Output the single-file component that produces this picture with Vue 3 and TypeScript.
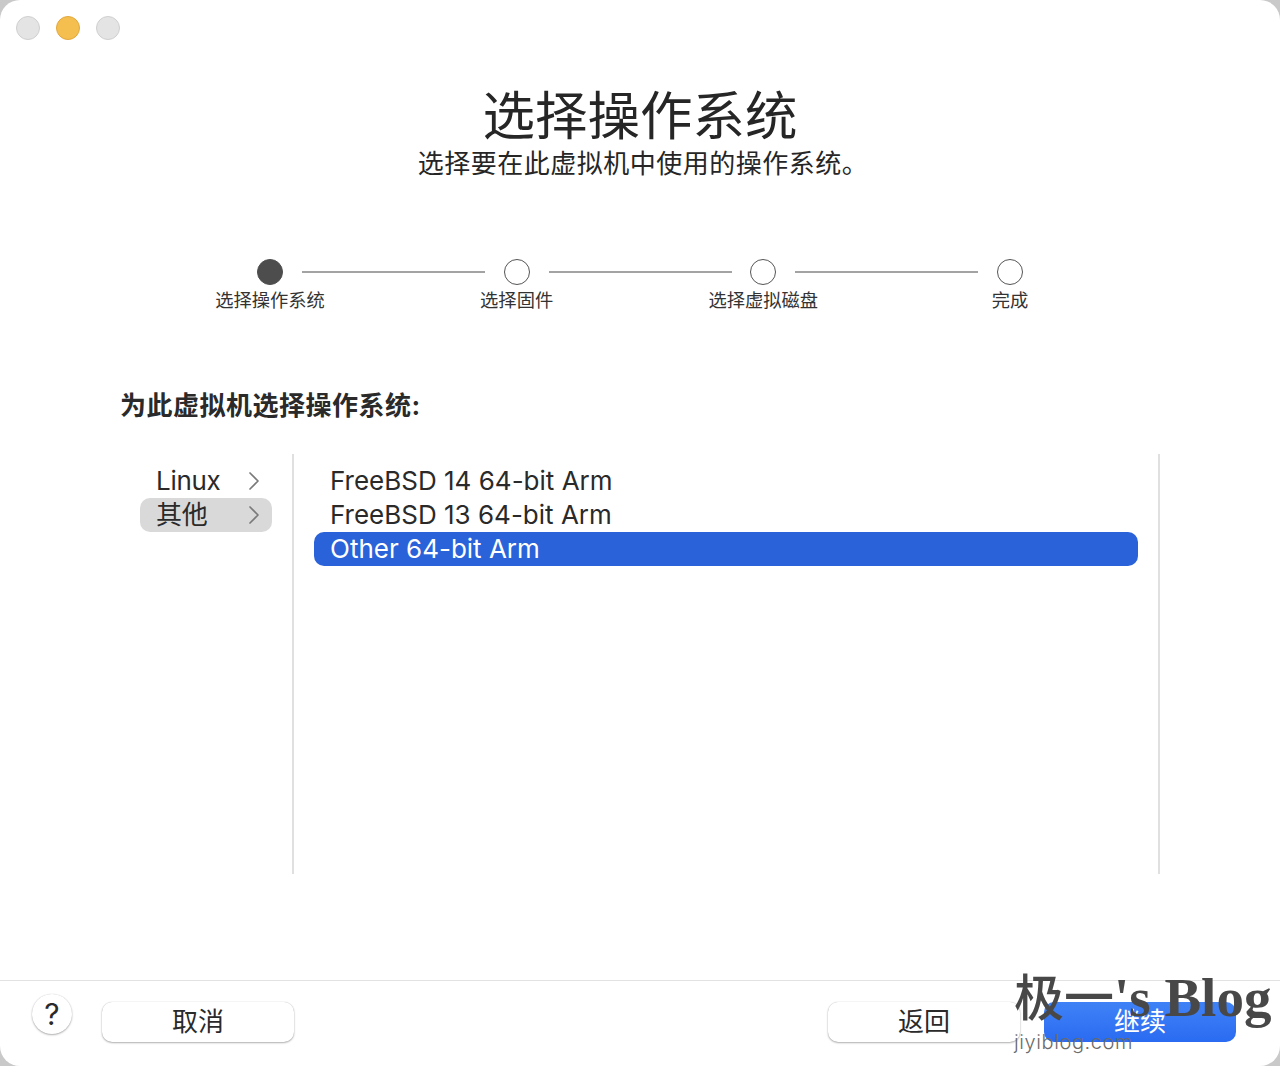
<script setup lang="ts">
interface Step { label: string; active: boolean }
const steps: Step[] = [
  { label: '选择操作系统', active: true },
  { label: '选择固件', active: false },
  { label: '选择虚拟磁盘', active: false },
  { label: '完成', active: false },
]
const categories = [
  { label: 'Linux', selected: false },
  { label: '其他', selected: true },
]
const systems = [
  { label: 'FreeBSD 14 64-bit Arm', selected: false },
  { label: 'FreeBSD 13 64-bit Arm', selected: false },
  { label: 'Other 64-bit Arm', selected: true },
]
</script>

<template>
  <div class="window">
    <div class="lights">
      <span class="light"></span>
      <span class="light amber"></span>
      <span class="light"></span>
    </div>

    <header class="head">
      <h1>选择操作系统</h1>
      <p>选择要在此虚拟机中使用的操作系统。</p>
    </header>

    <ol class="steps">
      <li v-for="(s, i) in steps" :key="s.label" class="step">
        <div class="track">
          <span class="dot" :class="{ on: s.active }"></span>
          <span v-if="i < steps.length - 1" class="line"></span>
        </div>
        <span class="step-label">{{ s.label }}</span>
      </li>
    </ol>

    <h2 class="prompt">为此虚拟机选择操作系统:</h2>

    <div class="browser">
      <div class="cats">
        <div v-for="c in categories" :key="c.label" class="cat" :class="{ sel: c.selected }">
          <span class="cat-name">{{ c.label }}</span>
          <svg width="10" height="18" viewBox="0 0 10 18" fill="none">
            <path d="M1 1 9 9 1 17" stroke="#7a7a7a" stroke-width="1.7" stroke-linecap="round" stroke-linejoin="round" />
          </svg>
        </div>
      </div>
      <div class="list">
        <div v-for="o in systems" :key="o.label" class="os" :class="{ sel: o.selected }">{{ o.label }}</div>
      </div>
    </div>

    <footer class="foot">
      <div class="foot-group">
        <button class="help" type="button">?</button>
        <button class="btn" type="button">取消</button>
      </div>
      <div class="foot-group wide">
        <button class="btn" type="button">返回</button>
        <button class="btn primary" type="button">继续</button>
      </div>
    </footer>

    <div class="mark">
      <div class="mark-big"><span class="mark-cjk">极一</span>'s Blog</div>
      <div class="mark-small">jiyiblog.com</div>
    </div>
  </div>
</template>

<style>
html, body { margin: 0; background: #c9c9c9; }
</style>

<style scoped>
.window {
  position: relative;
  width: 1280px;
  height: 1066px;
  background: #fff;
  border-radius: 20px;
  overflow: hidden;
  box-sizing: border-box;
  font-family: Inter, "Noto Sans CJK SC", sans-serif;
  color: #2a2a2a;
  display: flex;
  flex-direction: column;
}
.lights { display: flex; gap: 16px; padding: 16px 0 0 16px; height: 24px; }
.light {
  width: 24px; height: 24px; border-radius: 50%; box-sizing: border-box;
  background: #e4e4e4; border: 1px solid #cfcfcf;
}
.light.amber { background: #f5bf4f; border-color: #e1a73e; }

.head { text-align: center; margin-top: 45px; }
.head h1 { margin: 0; font-size: 52.5px; line-height: 62px; font-weight: 400; color: #262626; }
.head p { margin: 1px 0 0; padding-left: 6px; font-size: 26px; line-height: 32px; font-weight: 400; color: #262626; letter-spacing: .5px; }

.steps {
  list-style: none; margin: 79px 0 0; padding: 0 0 0 146.67px;
  display: flex;
}
.step { width: 246.67px; display: flex; flex-direction: column; align-items: center; position: relative; }
.track { height: 26px; width: 26px; position: relative; }
.dot {
  display: block; width: 26px; height: 26px; border-radius: 50%; box-sizing: border-box;
  border: 1.5px solid #555; background: #fff;
}
.dot.on { background: #4d4d4d; border-color: #4d4d4d; }
.line {
  position: absolute; left: 45px; top: 12px; width: 183px; height: 2px; background: #a3a3a3;
}
.step-label { font-size: 18.3px; line-height: 24px; margin-top: 3px; color: #333; white-space: nowrap; }

.prompt {
  margin: 76px 0 0 120px; font-size: 26px; line-height: 36px; font-weight: 700; color: #2a2a2a; letter-spacing: .5px;
}

.browser {
  display: flex; height: 420px; margin: 30px 0 0 0; padding-left: 140px; width: 1020px;
}
.cats {
  width: 132px; padding: 10px 20px 0 0; border-right: 2px solid #e0e0e0;
  box-sizing: content-box; flex: none;
}
.cat {
  height: 34px; border-radius: 10px; display: flex; align-items: center; justify-content: space-between;
  padding: 0 13px 0 16px; font-size: 26px; line-height: 34px; color: #2a2a2a;
}
.cat-name { letter-spacing: -.3px; }
.cat.sel { background: #d9d9d9; }
.list {
  flex: 1; padding: 10px 20px 0; border-right: 2px solid #e0e0e0;
}
.os {
  height: 34px; line-height: 34px; padding-left: 16px; font-size: 26px; border-radius: 10px; color: #2a2a2a;
}
.os.sel { background: #2962d9; color: #fff; }

.foot {
  margin-top: 106px; border-top: 1px solid #e2e2e2; height: 85px; box-sizing: border-box;
  display: flex; justify-content: space-between; padding: 13px 44px 0 32px;
}
.foot-group { display: flex; align-items: flex-start; gap: 30px; }
.foot-group.wide { gap: 24px; }
.help {
  width: 40px; height: 40px; border-radius: 50%; border: 0; background: #fff; padding: 0;
  box-shadow: 0 1px 2px rgba(0,0,0,.3), 0 0 1px rgba(0,0,0,.2);
  font: 400 30px/38px Inter, sans-serif; color: #2a2a2a;
}
.btn {
  width: 192px; height: 40px; margin-top: 8px; border: 0; border-radius: 10px; background: #fff;
  box-shadow: 0 1px 2px rgba(0,0,0,.3), 0 0 1px rgba(0,0,0,.25);
  font: 400 26px/40px Inter, "Noto Sans CJK SC", sans-serif; color: #2a2a2a; padding: 0;
}
.btn.primary {
  background: linear-gradient(#3f82f6, #2a6bf2); color: #fff; box-shadow: none;
}
.mark { position: absolute; left: 1014px; top: 966px; color: #484848; pointer-events: none; white-space: nowrap; }
.mark-big { font: 700 55px/64px "Liberation Serif", "Noto Sans CJK SC", serif; }
.mark-cjk { font-size: 50px; font-weight: 500; }
.mark-small { font: 300 20px/24px Inter, sans-serif; letter-spacing: .6px; color: #6a6a6a; margin-top: -1px; }
</style>
